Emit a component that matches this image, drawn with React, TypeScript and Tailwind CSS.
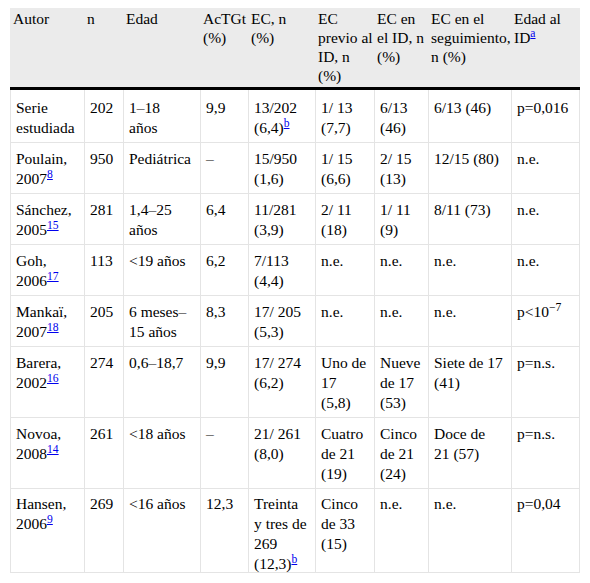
import React from "react";

type Line = string | React.ReactNode;

const W = ["w-[74px]", "w-[39px]", "w-[77px]", "w-[48px]", "w-[67px]", "w-[59px]", "w-[54px]", "w-[83px]", "w-[69px]"];

const Ref = ({ t }: { t: string }) => (
  <sup className="text-[#0000ee] underline">{t}</sup>
);

const header: Line[][] = [
  ["Autor"],
  ["n"],
  ["Edad"],
  ["AcTGt", "(%)"],
  ["EC, n", "(%)"],
  ["EC", "previo al", "ID, n", "(%)"],
  ["EC en", "el ID, n", "(%)"],
  ["EC en el", "seguimiento,", "n (%)"],
  ["Edad al", <>ID<Ref t="a" /></>],
];

const rows: { h: string; pt: string; cells: Line[][] }[] = [
  {
    h: "h-[53px]",
    pt: "pt-[8px]",
    cells: [
      ["Serie", "estudiada"],
      ["202"],
      ["1–18", "años"],
      ["9,9"],
      ["13/202", <>(6,4)<Ref t="b" /></>],
      ["1/ 13", "(7,7)"],
      ["6/13", "(46)"],
      ["6/13 (46)"],
      ["p=0,016"],
    ],
  },
  {
    h: "h-[51px]",
    pt: "pt-[6px]",
    cells: [
      ["Poulain,", <>2007<Ref t="8" /></>],
      ["950"],
      ["Pediátrica"],
      ["–"],
      ["15/950", "(1,6)"],
      ["1/ 15", "(6,6)"],
      ["2/ 15", "(13)"],
      ["12/15 (80)"],
      ["n.e."],
    ],
  },
  {
    h: "h-[51px]",
    pt: "pt-[6px]",
    cells: [
      ["Sánchez,", <>2005<Ref t="15" /></>],
      ["281"],
      ["1,4–25", "años"],
      ["6,4"],
      ["11/281", "(3,9)"],
      ["2/ 11", "(18)"],
      ["1/ 11", "(9)"],
      ["8/11 (73)"],
      ["n.e."],
    ],
  },
  {
    h: "h-[51px]",
    pt: "pt-[6px]",
    cells: [
      ["Goh,", <>2006<Ref t="17" /></>],
      ["113"],
      ["<19 años"],
      ["6,2"],
      ["7/113", "(4,4)"],
      ["n.e."],
      ["n.e."],
      ["n.e."],
      ["n.e."],
    ],
  },
  {
    h: "h-[51px]",
    pt: "pt-[6px]",
    cells: [
      ["Mankaï,", <>2007<Ref t="18" /></>],
      ["205"],
      ["6 meses–", "15 años"],
      ["8,3"],
      ["17/ 205", "(5,3)"],
      ["n.e."],
      ["n.e."],
      ["n.e."],
      [<>p&lt;10<sup>−7</sup></>],
    ],
  },
  {
    h: "h-[71px]",
    pt: "pt-[6px]",
    cells: [
      ["Barera,", <>2002<Ref t="16" /></>],
      ["274"],
      ["0,6–18,7"],
      ["9,9"],
      ["17/ 274", "(6,2)"],
      ["Uno de", "17", "(5,8)"],
      ["Nueve", "de 17", "(53)"],
      ["Siete de 17", "(41)"],
      ["p=n.s."],
    ],
  },
  {
    h: "h-[71px]",
    pt: "pt-[6px]",
    cells: [
      ["Novoa,", <>2008<Ref t="14" /></>],
      ["261"],
      ["<18 años"],
      ["–"],
      ["21/ 261", "(8,0)"],
      ["Cuatro", "de 21", "(19)"],
      ["Cinco", "de 21", "(24)"],
      ["Doce de", "21 (57)"],
      ["p=n.s."],
    ],
  },
  {
    h: "h-[84px]",
    pt: "pt-[5px]",
    cells: [
      ["Hansen,", <>2006<Ref t="9" /></>],
      ["269"],
      ["<16 años"],
      ["12,3"],
      ["Treinta", "y tres de", "269", <>(12,3)<Ref t="b" /></>],
      ["Cinco", "de 33", "(15)"],
      ["n.e."],
      ["n.e."],
      ["p=0,04"],
    ],
  },
];

export default function App() {
  return (
    <div className="w-[590px] h-[583px] bg-white text-black overflow-hidden font-['Liberation_Serif','Times_New_Roman',serif]">
      <div className="ml-[10px] mt-[8px] w-[570px]">
        <div className="flex h-[79px] bg-[#ebebeb] text-[15.5px] leading-[19px]">
          {header.map((c, i) => (
            <div key={i} className={`${W[i]} shrink-0 pt-[1px] pl-[3px] whitespace-nowrap`}>
              {c.map((l, j) => (
                <div key={j}>{l}</div>
              ))}
            </div>
          ))}
        </div>
        <div className="h-[3px] bg-black" />
        {rows.map((r, ri) => (
          <div key={ri} className={`flex ${r.h} border-b border-[#e4e4e4] text-[15.5px] leading-[20px]`}>
            {r.cells.map((c, i) => (
              <div
                key={i}
                className={`${W[i]} shrink-0 border-l border-[#e4e4e4] ${i === 8 ? "border-r" : ""} ${r.pt} pl-[5px] whitespace-nowrap`}
              >
                {c.map((l, j) => (
                  <div key={j}>{l}</div>
                ))}
              </div>
            ))}
          </div>
        ))}
      </div>
    </div>
  );
}
